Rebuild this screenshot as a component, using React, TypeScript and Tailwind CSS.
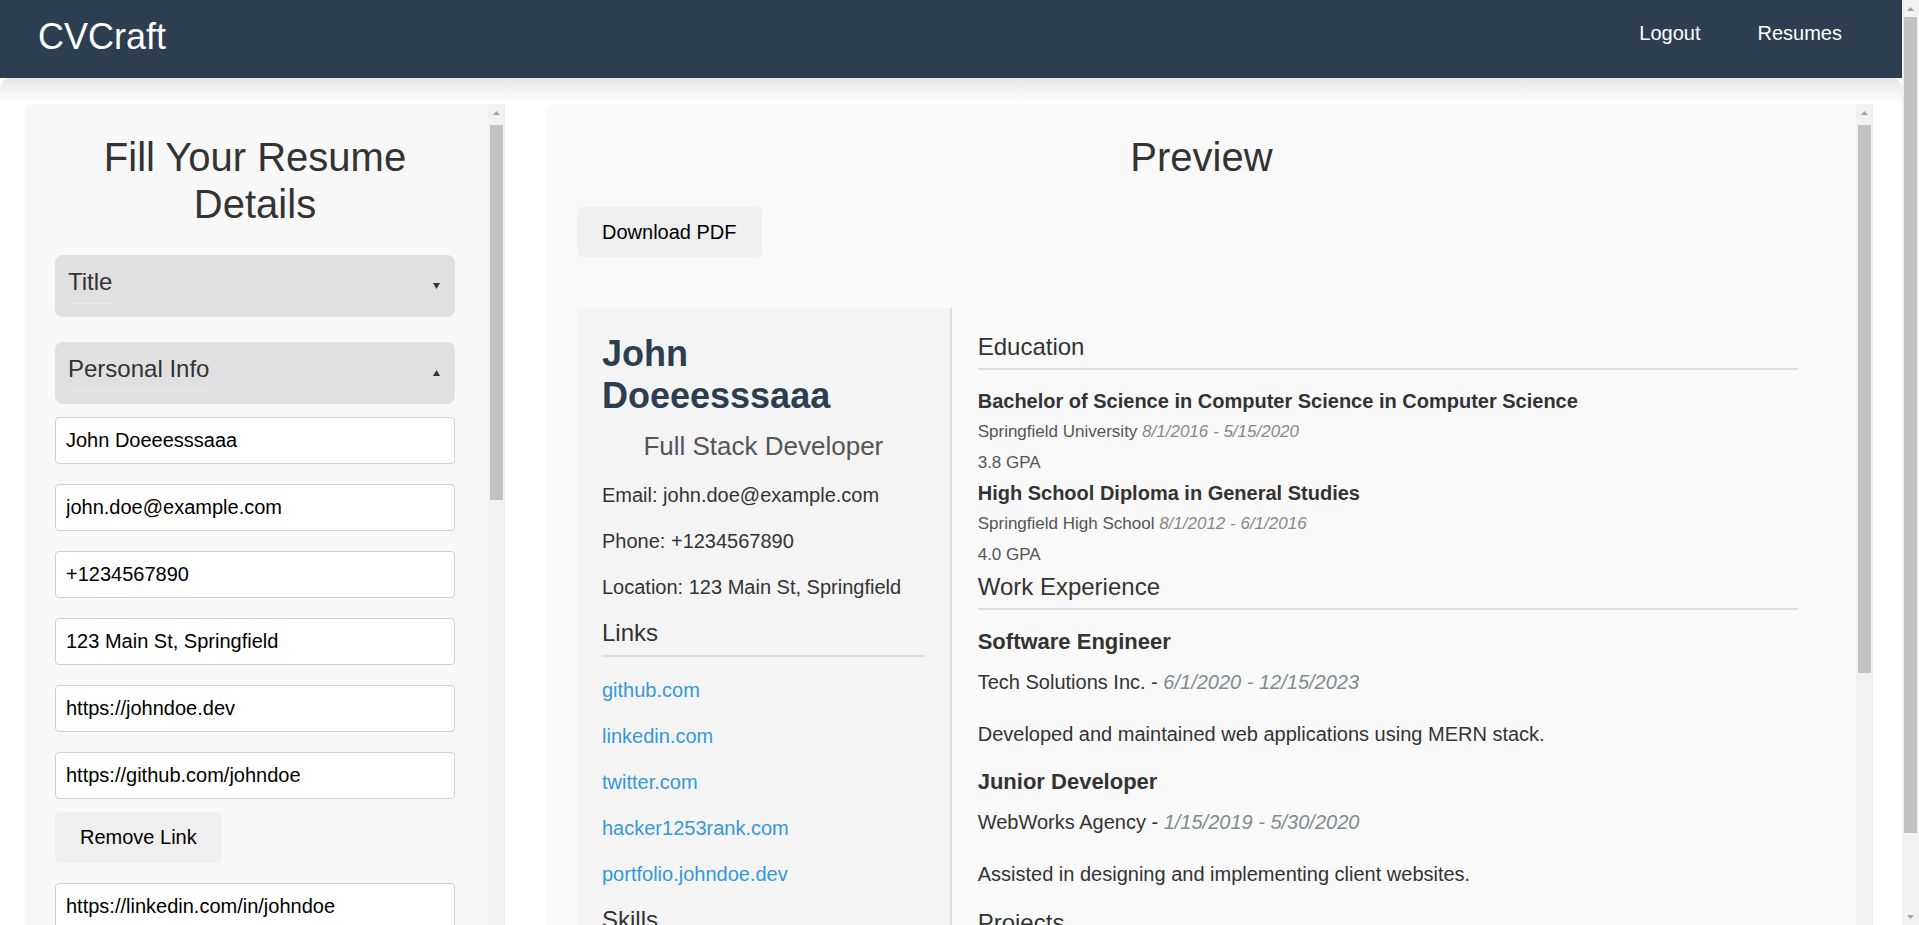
import React from "react";

const links = [
  "https://github.com/johndoe",
  "https://linkedin.com/in/johndoe",
  "https://twitter.com/johndoe",
  "https://hacker1253rank.com/johndoe",
  "https://portfolio.johndoe.dev",
];

const previewLinks = [
  "github.com",
  "linkedin.com",
  "twitter.com",
  "hacker1253rank.com",
  "portfolio.johndoe.dev",
];

function Caret({ up }: { up?: boolean }) {
  return (
    <svg width="7" height="6" viewBox="0 0 7 6" className="shrink-0">
      <path d={up ? "M3.5 0L7 6H0z" : "M0 0h7L3.5 6z"} fill="#333" />
    </svg>
  );
}

// classic scrollbar look (the page is a fixed frame, so bars are drawn)
function ScrollArrow({ down }: { down?: boolean }) {
  return (
    <div className="flex h-[17px] shrink-0 items-center justify-center">
      <svg width="7" height="4" viewBox="0 0 7 4">
        <path d={down ? "M0 0h7L3.5 4z" : "M3.5 0L7 4H0z"} fill="#a3a3a3" />
      </svg>
    </div>
  );
}

function Scrollbar({ thumb, down }: { thumb: string; down?: boolean }) {
  return (
    <div className="flex w-[17px] shrink-0 flex-col bg-[#f1f1f1]">
      <ScrollArrow />
      <div className={`mx-[2px] shrink-0 bg-[#c1c1c1] ${thumb}`} />
      <div className="flex-1" />
      {down && <ScrollArrow down />}
    </div>
  );
}

function SectionHeader({ title, open }: { title: string; open?: boolean }) {
  return (
    <div className="flex h-[62px] items-center justify-between rounded-lg bg-[#e0e0e0] pl-[13px] pr-[15px]">
      <span className="border-b border-[#e9e9e9] pb-[7px] text-[24px] leading-[28px] text-[#333]">
        {title}
      </span>
      <Caret up={open} />
    </div>
  );
}

function Field({ value, className = "" }: { value: string; className?: string }) {
  return (
    <input
      readOnly
      defaultValue={value}
      className={`block h-[47px] w-full shrink-0 rounded border border-[#d0d0d0] bg-white px-[10px] text-[20px] text-black outline-none ${className}`}
    />
  );
}

function GrayButton({ label, className = "" }: { label: string; className?: string }) {
  return (
    <button className={`block h-[51px] shrink-0 rounded-md bg-[#efefef] px-[25px] text-[20px] leading-[23px] text-black ${className}`}>
      {label}
    </button>
  );
}

function FormPanel() {
  return (
    <div className="flex h-[881px] w-[480px] shrink-0 overflow-hidden rounded-l-lg bg-[#f8f8f8]">
      <div className="min-w-0 flex-1 overflow-hidden pl-[30px] pr-[33px] pt-[30px]">
        <h2 className="text-center text-[40px] leading-[47px] text-[#333]">Fill Your Resume Details</h2>

        <div className="mt-[27px]">
          <SectionHeader title="Title" />
        </div>
        <div className="mt-[25px]">
          <SectionHeader title="Personal Info" open />
        </div>

        {/* Personal info fields */}
        <Field value="John Doeeesssaaa" className="mt-[13px]" />
        <Field value="john.doe@example.com" className="mt-[20px]" />
        <Field value="+1234567890" className="mt-[20px]" />
        <Field value="123 Main St, Springfield" className="mt-[20px]" />
        <Field value="https://johndoe.dev" className="mt-[20px]" />

        {links.map((l) => (
          <div key={l}>
            <Field value={l} className="mt-[20px]" />
            <GrayButton label="Remove Link" className="mt-[13px]" />
          </div>
        ))}
        <GrayButton label="Add Link" className="mt-[20px]" />

        {["Skills", "Education", "Work Experience", "Projects"].map((s) => (
          <div key={s} className="mt-[25px]">
            <SectionHeader title={s} />
          </div>
        ))}
      </div>
      <Scrollbar thumb="mt-[4px] h-[375px]" down />
    </div>
  );
}

function SectionTitle({ children, className = "" }: { children: React.ReactNode; className?: string }) {
  return (
    <h3 className={`border-b-2 border-[#ddd] pb-[7px] text-[24px] leading-[28px] text-[#333] ${className}`}>
      {children}
    </h3>
  );
}

function PreviewPanel() {
  return (
    <div className="flex h-[881px] min-w-0 flex-1 overflow-hidden rounded-l-lg bg-[#f9f9f9]">
      <div className="min-w-0 flex-1 overflow-hidden px-[30px] pt-[30px]">
        <h2 className="text-center text-[40px] leading-[47px] text-[#333]">Preview</h2>
        <button className="mt-[26px] block h-[50px] rounded-md bg-[#efefef] px-[25px] text-[20px] leading-[23px] text-black">
          Download PDF
        </button>

        {/* Resume */}
        <div className="mt-[51px] flex">
          {/* Left column */}
          <div className="w-[30%] shrink-0 border-r-2 border-[#ddd] bg-[#f4f4f4] px-[25px] pb-[30px] pt-[25px]">
            <h1 className="text-[36px] font-bold leading-[42px] text-[#2c3e50]">
              John
              <br />
              Doeeesssaaa
            </h1>
            <p className="mt-[14px] text-center text-[26px] leading-[30px] text-[#555]">Full Stack Developer</p>
            <p className="mt-[22px] text-[20px] leading-[24px] text-[#333]">Email: john.doe@example.com</p>
            <p className="mt-[22px] text-[20px] leading-[24px] text-[#333]">Phone: +1234567890</p>
            <p className="mt-[22px] text-[20px] leading-[24px] text-[#333]">Location: 123 Main St, Springfield</p>

            <SectionTitle className="mt-[20px] pb-[8px]">Links</SectionTitle>
            <div className="mt-[21px] flex flex-col gap-[22px]">
              {previewLinks.map((l) => (
                <a key={l} className="text-[20px] leading-[24px] text-[#3498db]">
                  {l}
                </a>
              ))}
            </div>

            <SectionTitle className="mt-[20px] pb-[8px]">Skills</SectionTitle>
            <ul className="mt-[20px] flex flex-col gap-[14px] text-[20px] leading-[24px] text-[#333]">
              <li>JavaScript</li>
              <li>React</li>
              <li>Node.js</li>
            </ul>
          </div>

          {/* Right column */}
          <div className="min-w-0 flex-1 pl-[26px] pr-[28px] pt-[25px]">
            <SectionTitle>Education</SectionTitle>
            <p className="mt-[19px] text-[20px] font-bold leading-[24px] text-[#333]">
              Bachelor of Science in Computer Science in Computer Science
            </p>
            <p className="mt-[9px] text-[17px] leading-[20px] text-[#555]">
              Springfield University <em className="text-[#888]">8/1/2016 - 5/15/2020</em>
            </p>
            <p className="mt-[11px] text-[17px] leading-[20px] text-[#555]">3.8 GPA</p>
            <p className="mt-[8px] text-[20px] font-bold leading-[24px] text-[#333]">
              High School Diploma in General Studies
            </p>
            <p className="mt-[9px] text-[17px] leading-[20px] text-[#555]">
              Springfield High School <em className="text-[#888]">8/1/2012 - 6/1/2016</em>
            </p>
            <p className="mt-[11px] text-[17px] leading-[20px] text-[#555]">4.0 GPA</p>

            <SectionTitle className="mt-[8px]">Work Experience</SectionTitle>
            <p className="mt-[19px] text-[22px] font-bold leading-[26px] text-[#333]">Software Engineer</p>
            <p className="mt-[15px] text-[20px] leading-[24px] text-[#333]">
              Tech Solutions Inc. - <em className="text-[#7f8c8d]">6/1/2020 - 12/15/2023</em>
            </p>
            <p className="mt-[28px] text-[20px] leading-[24px] text-[#333]">
              Developed and maintained web applications using MERN stack.
            </p>
            <p className="mt-[23px] text-[22px] font-bold leading-[26px] text-[#333]">Junior Developer</p>
            <p className="mt-[15px] text-[20px] leading-[24px] text-[#333]">
              WebWorks Agency - <em className="text-[#7f8c8d]">1/15/2019 - 5/30/2020</em>
            </p>
            <p className="mt-[28px] text-[20px] leading-[24px] text-[#333]">
              Assisted in designing and implementing client websites.
            </p>

            <SectionTitle className="mt-[23px]">Projects</SectionTitle>
          </div>
        </div>
      </div>
      <Scrollbar thumb="mt-[4px] h-[548px]" down />
    </div>
  );
}

export default function App() {
  return (
    <div className="flex h-screen overflow-hidden bg-white font-['Liberation_Sans',Arial,sans-serif]">
      <div className="min-w-0 flex-1 overflow-hidden">
        <header className="flex h-[78px] items-start justify-between bg-[#2c3e50] pl-[38px] pr-[60px] text-white">
          <div className="mt-[16px] text-[36px] leading-[41px]">CVCraft</div>
          <nav className="mt-[22px] flex gap-[57px] text-[20px] leading-[23px]">
            <a>Logout</a>
            <a>Resumes</a>
          </nav>
        </header>

        <main className="flex gap-[42px] rounded-t-[10px] bg-[linear-gradient(to_bottom,#e6e6e6,#ffffff_26px)] pb-[25px] pl-[25px] pr-[29px] pt-[26px]">
          <FormPanel />
          <PreviewPanel />
        </main>
      </div>

      {/* page scrollbar */}
      <Scrollbar thumb="h-[816px]" down />
    </div>
  );
}
